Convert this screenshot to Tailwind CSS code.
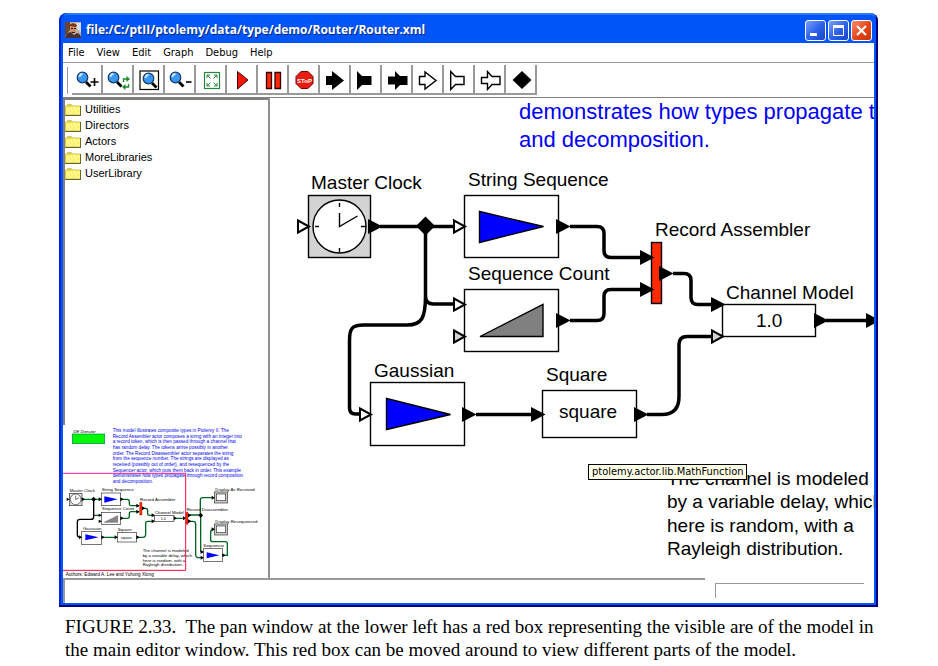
<!DOCTYPE html>
<html lang="en">
<head>
<meta charset="utf-8">
<title>Router.xml</title>
<script src="https://cdn.jsdelivr.net/npm/@tailwindcss/browser@4"></script>
</head>
<body class="bg-white text-black">
<figure class="pt-[13px] pl-[59px] pr-[60px]">
  <section class="rounded-t-lg bg-[#0055fa] px-1 pb-1 shadow-[inset_-2px_-2px_0_#00007c,inset_2px_0_0_#0028d8,inset_0_2px_0_#2a78f8]">
    <header class="flex h-[30px] items-center gap-1 pr-[2px] pl-[2px] pt-1">
      <svg class="size-4 shrink-0" viewBox="0 0 16 16" aria-hidden="true">
        <rect width="16" height="16" fill="#b9b3a4"/><path d="M0 0h5v8L0 14z" fill="#6b4434"/><path d="M11 1h5v9l-4-3z" fill="#d9dde0"/>
        <path d="M5 3q3-4 6 0v6q-3 4-6 0z" fill="#c98d68"/><path d="M4 4q3-5 8-1l-1 2-6-1z" fill="#803018"/><path d="M0 16q1-6 6-6l3 3 3-2q4 1 4 5z" fill="#4a3030"/><path d="M6 6h2v1H6zM9 6h2v1H9zM7 10h3v1H7z" fill="#3a1a10"/>
      </svg>
      <h1 class="min-w-0 flex-1 truncate pl-px font-['Open_Sans',sans-serif] text-[12px] font-bold leading-5 text-white [text-shadow:1px_1px_0_#0a2a80]">file:/C:/ptII/ptolemy/data/type/demo/Router/Router.xml</h1>
      <div class="flex gap-[2px]">
        <button aria-label="Minimize" class="size-[21px] rounded-[3px] border border-white bg-linear-to-br from-[#7aa0ff] via-[#2f63e8] to-[#1a45c8]"><svg class="size-[19px]" viewBox="0 0 19 19"><path d="M4 12h7v3H4z" fill="#fff"/></svg></button>
        <button aria-label="Maximize" class="size-[21px] rounded-[3px] border border-white bg-linear-to-br from-[#7aa0ff] via-[#2f63e8] to-[#1a45c8]"><svg class="size-[19px]" viewBox="0 0 19 19"><path d="M4.500 5.500h10v9h-10z" fill="none" stroke="#fff"/><path d="M4 4h11v3H4z" fill="#fff"/></svg></button>
        <button aria-label="Close" class="size-[21px] rounded-[3px] border border-white bg-linear-to-br from-[#f58a68] via-[#e84818] to-[#c83200]"><svg class="size-[19px]" viewBox="0 0 19 19"><path d="M5 5l9 9M14 5l-9 9" fill="none" stroke="#fff" stroke-width="2.200"/></svg></button>
      </div>
    </header>

    <nav class="flex h-5 items-center gap-3 border-b border-[#999] bg-white pl-[5px] font-['DejaVu_Sans_Condensed','DejaVu_Sans',sans-serif] text-[11px] leading-4">
      <button>File</button><button>View</button><button>Edit</button><button>Graph</button><button>Debug</button><button>Help</button>
    </nav>

    <div role="toolbar" aria-label="Tools" class="flex h-[35px] items-start border-b border-[#808080] bg-white pt-[2px] pl-1 [&_button]:h-[30px] [&_button]:w-[31px] [&_button]:border-r-2 [&_button]:border-b-2 [&_button]:border-[#999] [&_svg]:h-7 [&_svg]:w-[29px]">
      <div class="mr-1 mt-[2px] h-[27px] w-px bg-[#999]"></div>
      <button aria-label="Zoom in"><svg viewBox="0 0 29 28"><use href="#lens" x="0" y="0"/><path d="M18.500 17h8M22.500 13v8" stroke="#000" stroke-width="1.600"/></svg></button>
      <button aria-label="Zoom reset"><svg viewBox="0 0 29 28"><use href="#lens" x="0" y="0"/><path d="M20.500 17v-3h5M25.500 19v3h-5" fill="none" stroke="#188a28" stroke-width="1.400"/><path d="M23.500 11l3.500 3-3.500 3zM22.500 19l-3.500 3 3.500 3z" fill="#188a28"/></svg></button>
      <button aria-label="Zoom fit"><svg viewBox="0 0 29 28"><rect x="6" y="6" width="18.500" height="18.500" fill="#fffff0" stroke="#000" stroke-width="1.200"/><use href="#lens" x="4" y="1"/></svg></button>
      <button aria-label="Zoom out"><svg viewBox="0 0 29 28"><use href="#lens" x="0" y="0"/><path d="M21 17h5.500" stroke="#000" stroke-width="1.600"/></svg></button>
      <button aria-label="Full screen"><svg viewBox="0 0 29 28"><rect x="8.500" y="7.500" width="15" height="16" fill="#fff" stroke="#28863a" stroke-width="1.200"/><path d="M11 13v-3h3M18 10h3v3M21 18v3h-3M14 21h-3v-3M11 10l3.500 3.500M21 10l-3.500 3.500M21 21l-3.500-3.500M11 21l3.500-3.500" fill="none" stroke="#28863a"/></svg></button>
      <button aria-label="Run"><svg viewBox="0 0 29 28"><path d="M10.500 6.500v17.500l10.500-9z" fill="#f01800" stroke="#400" stroke-width="1"/></svg></button>
      <button aria-label="Pause"><svg viewBox="0 0 29 28"><path d="M8.500 7.500h5v16h-5zM17 7.500h5.500v16H17z" fill="#ff2800" stroke="#300" stroke-width="1.300"/></svg></button>
      <button aria-label="Stop"><svg viewBox="0 0 29 28"><path d="M12 6.500h7l5 5v7l-5 5h-7l-5-5v-7z" fill="#e81c10" stroke="#700"/><text x="15.500" y="17.500" text-anchor="middle" fill="#fff" class="font-['Liberation_Sans',sans-serif] text-[6px] font-bold">SToP</text></svg></button>
      <button aria-label="Black output port"><svg viewBox="0 0 29 28"><path d="M6 11h6V6l12 9.500L12 25v-5H6z"/></svg></button>
      <button aria-label="Black input port"><svg viewBox="0 0 29 28"><path d="M6 6l5 5h9.500v9H11l-5 5z"/></svg></button>
      <button aria-label="Black input output port"><svg viewBox="0 0 29 28"><path d="M6 11.500h7V6l5 5h7.500v9H18l-5 5v-5.500H6z"/></svg></button>
      <button aria-label="White output port"><svg viewBox="0 0 29 28"><path d="M6.500 11.500H12V7l11 8.500L12 24v-4.500H6.500z" fill="#fff" stroke="#000" stroke-width="1.400"/></svg></button>
      <button aria-label="White input port"><svg viewBox="0 0 29 28"><path d="M6.700 6.500l4.800 5h8.500v8h-8.500l-4.800 5z" fill="#fff" stroke="#000" stroke-width="1.400"/></svg></button>
      <button aria-label="White input output port"><svg viewBox="0 0 29 28"><path d="M6.500 12.500h6V6.500l4.500 5h8v8h-8l-4.500 5v-6h-6z" fill="#fff" stroke="#000" stroke-width="1.400"/></svg></button>
      <button aria-label="Relation"><svg viewBox="0 0 29 28"><path d="M16 6l9.500 9-9.500 9-9.500-9z"/></svg></button>
      <svg class="hidden" aria-hidden="true"><defs>
        <g id="lens"><path d="M14 17l4.500 4.500" stroke="#000" stroke-width="2.800"/><circle cx="10.500" cy="12.500" r="5.300" fill="#3a98f0" stroke="#123a70" stroke-width="1.200"/><path d="M7.500 12a3 3 0 0 1 3-3" fill="none" stroke="#c8ecff" stroke-width="1.800"/></g>
        <g id="folder"><path d="M1 3l1.500-2h4L8 3z" fill="#d8cc50"/><path d="M.5 3h15v9H.5z" fill="#fcf880" stroke="#d0c450"/><path d="M0 12.500h16M15.500 3v10" stroke="#66662e" stroke-width="1"/><path d="M3 5h1M7 6h1M11 5h1M5 8h1M9 9h1M13 8h1M3 10h1M7 11h1" stroke="#f8c878"/></g>
      </defs></svg>
    </div>

    <main class="flex bg-white">
      <aside class="flex w-[205px] shrink-0 flex-col">
        <nav class="h-[327px] border-t-2 border-l-2 border-[#808078] pt-px font-['Liberation_Sans',Arial,sans-serif] text-[11px] leading-4">
          <ul>
            <li class="flex items-center gap-1"><svg class="h-[13px] w-4" viewBox="0 0 16 13"><use href="#folder"/></svg><a href="#utilities">Utilities</a></li>
            <li class="flex items-center gap-1"><svg class="h-[13px] w-4" viewBox="0 0 16 13"><use href="#folder"/></svg><a href="#directors">Directors</a></li>
            <li class="flex items-center gap-1"><svg class="h-[13px] w-4" viewBox="0 0 16 13"><use href="#folder"/></svg><a href="#actors">Actors</a></li>
            <li class="flex items-center gap-1"><svg class="h-[13px] w-4" viewBox="0 0 16 13"><use href="#folder"/></svg><a href="#more">MoreLibraries</a></li>
            <li class="flex items-center gap-1"><svg class="h-[13px] w-4" viewBox="0 0 16 13"><use href="#folder"/></svg><a href="#user">UserLibrary</a></li>
          </ul>
        </nav>
        <!-- Pan window: reduced view of the whole model, three units per pixel -->
        <svg class="h-[153px] w-[205px] font-['Liberation_Sans',Arial,sans-serif] text-[13px]" viewBox="9 15 615 459" aria-label="Pan window">
          <text x="40" y="39" font-style="italic">DE Director</text>
          <rect x="37" y="42" width="97" height="29" fill="#00f800" stroke="#084" stroke-width="2"/>
          <g fill="#0000f0" class="text-[14px]">
            <text x="158" y="36">This model illustrates composite types in Ptolemy II. The</text>
            <text x="158" y="53">Record Assembler actor composes a string with an integer into</text>
            <text x="158" y="70">a record token, which is then passed through a channel that</text>
            <text x="158" y="87">has random delay. The tokens arrive possibly in another</text>
            <text x="158" y="104">order. The Record Disassembler actor separates the string</text>
            <text x="158" y="121">from the sequence number. The strings are displayed as</text>
            <text x="158" y="138">received (possibly out of order), and resequenced by the</text>
            <text x="158" y="155">Sequencer actor, which puts them back in order. This example</text>
            <text x="158" y="172">demonstrates how types propagate through record composition</text>
            <text x="158" y="189">and decomposition.</text>
          </g>
          <g fill="none" stroke="#062" stroke-width="4">
            <path d="M66 238h58M182 238h20q6 0 6 7v8q0 4 6 4h22M182 295h20q6 0 6-7v-7q0-6 6-6h22M247 265h10q6 0 6 7v10q0 4 6 4h14M102 286h24M125 352h46M230 352h18q9 0 9-10v-32q0-6 6-6h20M343 295h36M385 285h36v-45q0-7 7-7h32M422 285v110h8M385 304h14q8 0 8 8v92q0 9 10 9h14M488 406h14v-35q0-6-6-6h-38q-6 0-6-6v-24q0-7 10-7"/>
            <path d="M101 238v52q0 8-8 8H60q-8 0-8 8v38q0 8 12 8" stroke="#000"/>
          </g>
          <g fill="#fff" stroke="#333" stroke-width="2">
            <rect x="28" y="220" width="38" height="37" fill="#ddd"/><circle cx="47" cy="238" r="16"/><path d="M47 227v12l10-6" fill="none"/>
            <rect x="124" y="219" width="58" height="38"/><rect x="124" y="277" width="58" height="36"/><rect x="64" y="335" width="61" height="38"/><rect x="172" y="338" width="58" height="28"/><rect x="284" y="286" width="58" height="18"/><rect x="430" y="386" width="58" height="38"/>
            <rect x="463" y="216" width="40" height="33" fill="#ccc"/><rect x="469" y="222" width="28" height="20"/><rect x="463" y="312" width="40" height="33" fill="#ccc"/><rect x="469" y="318" width="28" height="20"/>
          </g>
          <path d="M133 229v19l40-10zM76 343v18l40-9zM440 397v18l38-9z" fill="#00f"/>
          <path d="M133 307h40v-20z" fill="#888" stroke="#222"/>
          <path d="M239 247h7v38h-7zM378 277h6v36h-6z" fill="#f03000" stroke="#900"/>
          <path d="M20 233v10l9-5zM65 232v12l10-6zM101 230l7 8-7 8-7-8zM116 232v12l10-6zM181 232v12l10-6zM116 281v10l10-5zM116 299v10l10-5zM181 289v12l10-6zM229 251v12l10-6zM229 269v12l10-6zM246 259v12l10-6zM275 280v12l10-6zM275 298v12l10-6zM341 289v12l10-6zM369 289v12l10-6zM384 280v12l10-6zM384 298v12l10-6zM124 346v12l10-6zM164 346v12l10-6zM229 346v12l10-6zM57 346v12l9-6zM422 278l7 8-7 8-7-8zM455 227v12l10-6zM455 322v12l10-6zM422 390v12l10-6zM422 407v12l10-6zM487 400v12l10-6z"/>
          <g>
            <text x="29" y="215">Master Clock</text><text x="125" y="213">String Sequence</text><text x="126" y="271">Sequence Count</text><text x="240" y="244">Record Assembler</text><text x="284" y="282">Channel Model</text><text x="69" y="331">Gaussian</text><text x="173" y="334">Square</text><text x="302" y="299" class="text-[11px]">1.0</text><text x="182" y="356" class="text-[11px]">square</text>
            <text x="380" y="273">Record Disassembler</text><text x="466" y="213">Display As Received</text><text x="466" y="308">Display Resequenced</text><text x="430" y="382">Sequencer</text>
            <text x="248" y="396">The channel is modeled</text><text x="248" y="410">by a variable delay, which</text><text x="248" y="425">here is random, with a</text><text x="248" y="439">Rayleigh distribution.</text>
            <text x="17" y="468" class="text-[14px]">Authors: Edward A. Lee and Yuhong Xiong</text>
          </g>
          <path d="M9 160h368" fill="none" stroke="#e020a0" stroke-width="3"/><path d="M377 160v291H9" fill="none" stroke="#ff1040" stroke-width="3"/>
        </svg>
      </aside>

      <div class="relative min-w-0 flex-1 border-l-2 border-[#909090]">
        <svg class="h-[480px] w-full font-['Liberation_Sans',Arial,sans-serif] text-[19px]" aria-label="Model graph">
          <defs><path id="port" d="M0-7.500v15L14.500 0z"/><path id="open" d="M1-6v12L12 0z" stroke="#000" stroke-width="2"/></defs>
          <!-- Model coordinates start at 270,98 for the visible region -->
          <g transform="translate(-270 -98)">
            <g fill="none" stroke="#000" stroke-width="3.500">
              <path d="M380 226.500h74M570 226.500h27q7 0 7 7v17q0 7 7 7h30M570 320.500h27q7 0 7-7v-17q0-7 7-7h30M673 273.500h11q7 0 7 7v17q0 7 7 7h14M826 320.500h42M476 414.500h56M647 414.500h15q17 0 17-18v-52q0-8 8-8h25"/>
              <path d="M425.500 226v70q0 8 8 8h20M425.500 226v70c0 22-4 29-18 29h-44c-12 0-14 4-14 16v67q0 6 6 6h6"/>
            </g>
            <g fill="#fff" stroke="#000" stroke-width="1.400">
              <rect x="308.500" y="195.500" width="62" height="62" fill="#d3d3d3"/><circle cx="339.500" cy="226.500" r="26.500"/>
              <path d="M339.500 203v4M339.500 248v4M315 226.500h4M361 226.500h5M339.500 213v13.500l18-10.500" fill="none"/>
              <rect x="464.500" y="195.500" width="94" height="62"/><rect x="464.500" y="289.500" width="94" height="62"/><rect x="370.500" y="382.500" width="94" height="63"/><rect x="542.500" y="390.500" width="94" height="47"/><rect x="722.500" y="304.500" width="93" height="32"/>
              <path d="M479.500 211.500v31l64-16zM386.500 398.500v31l64-15z" fill="#00f"/><path d="M480 336.500h63v-32z" fill="#808080"/><rect x="651.500" y="242.500" width="10" height="61" fill="#ff2a00"/>
            </g>
            <path d="M425.500 216.500l9.500 9.500-9.500 9.500-9.500-9.500z"/>
            <use href="#port" x="368" y="226.500"/><use href="#port" x="556" y="226.500"/><use href="#port" x="556" y="320.500"/><use href="#port" x="640" y="257.500"/><use href="#port" x="640" y="289.500"/><use href="#port" x="659" y="273.500"/><use href="#port" x="711" y="304.500"/><use href="#port" x="814" y="320.500"/><use href="#port" x="866" y="320.500"/><use href="#port" x="462" y="414.500"/><use href="#port" x="531" y="414.500"/><use href="#port" x="634" y="414.500"/>
            <g fill="#fff"><use href="#open" x="297" y="226.500"/><use href="#open" x="453" y="226.500"/><use href="#open" x="453" y="304.500"/><use href="#open" x="359" y="414.500"/></g>
            <g fill="#d3d3d3"><use href="#open" x="453" y="336.500"/><use href="#open" x="711" y="336.500"/></g>
            <text x="311" y="189">Master Clock</text><text x="468" y="186">String Sequence</text><text x="468" y="280">Sequence Count</text><text x="655" y="236">Record Assembler</text><text x="726" y="299">Channel Model</text><text x="374" y="377">Gaussian</text><text x="546" y="381">Square</text><text x="756" y="327">1.0</text><text x="559" y="418">square</text>
            <text x="667" y="485">The channel is modeled</text><text x="667" y="508">by a variable delay, which</text><text x="667" y="532">here is random, with a</text><text x="667" y="555">Rayleigh distribution.</text>
            <g fill="#0000f4" class="text-[22px]"><text x="519" y="119">demonstrates how types propagate through record composition</text><text x="519" y="147">and decomposition.</text></g>
          </g>
        </svg>
        <div role="tooltip" class="absolute top-[366px] left-[318px] border border-black bg-[#ffffe8] px-[3px] font-['DejaVu_Sans_Condensed','DejaVu_Sans',sans-serif] text-[11px] leading-[14px]">ptolemy.actor.lib.MathFunction</div>
      </div>
    </main>

    <footer class="flex h-[25px] items-start gap-[10px] bg-white pr-[10px]">
      <output class="h-[25px] flex-1 border-t-2 border-l-2 border-[#999]"></output>
      <output class="mt-[5px] h-[15px] w-[149px] border-t border-l border-[#999]"></output>
    </footer>
  </section>
  <figcaption class="-mr-10 pt-2 pl-[6px] font-['Liberation_Serif','Times_New_Roman',serif] text-[19px] leading-[23px]">FIGURE 2.33.&nbsp; The pan window at the lower left has a red box representing the visible are of the model in<br>the main editor window. This red box can be moved around to view different parts of the model.</figcaption>
</figure>
</body>
</html>
